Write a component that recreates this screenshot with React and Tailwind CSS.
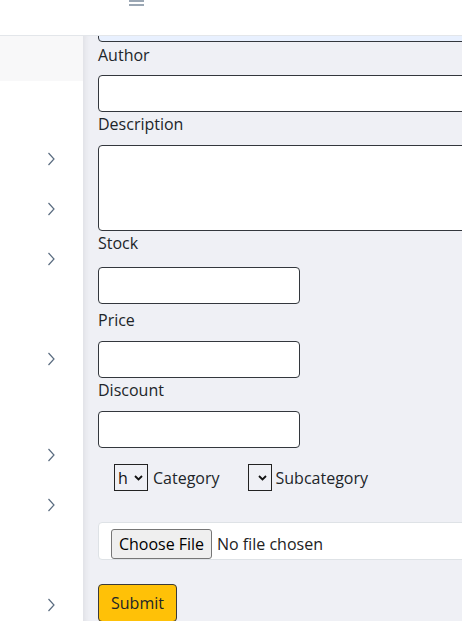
const rows = [
  { h: 50, arrow: true },
  { h: 50, arrow: true },
  { h: 50, arrow: true },
  { h: 50, arrow: false },
  { h: 50, arrow: true },
  { h: 46, arrow: false },
  { h: 50, arrow: true },
  { h: 50, arrow: true },
  { h: 50, arrow: false },
  { h: 50, arrow: true },
];

function Chevron() {
  return (
    <svg width="8" height="14" viewBox="0 0 8 14" fill="none">
      <polyline points="1.5,1 7,7 1.5,13" stroke="#5a6c80" strokeWidth="1.2" />
    </svg>
  );
}

function SelectBox({ value, w }) {
  return (
    <div className={`flex items-center h-[27px] border border-[#222] bg-transparent ${w}`}>
      {value && <span className="pl-[3px] text-[#111] leading-none">{value}</span>}
      <svg className="ml-auto mr-[4px]" width="9" height="6" viewBox="0 0 9 6" fill="none">
        <polyline points="1,1 4.5,4.5 8,1" stroke="#111" strokeWidth="1.8" />
      </svg>
    </div>
  );
}

function Label({ children, className = "" }) {
  return <label className={`block leading-6 ${className}`}>{children}</label>;
}

export default function App() {
  const field = "block h-[37px] rounded border border-[#33373d] bg-white";
  return (
    <div
      className="w-[462px] h-[621px] overflow-hidden bg-white text-[16px] text-[#212529]"
      style={{ fontFamily: '"Open Sans", "Noto Sans", sans-serif' }}
    >
      <header className="h-[36px] border-b border-[#e3e6ea] bg-white pl-[129px] flex flex-col gap-[2px]">
        <div className="w-[15px] h-[2px] bg-[#9ba7b4]" />
        <div className="w-[15px] h-[2px] bg-[#9ba7b4]" />
      </header>

      <div className="flex h-[585px]">
        <aside className="w-[83px] shrink-0 bg-white">
          <div className="h-[45px] bg-[#f8f8f9]" />
          <div className="h-[53px]" />
          {rows.map((r, i) => (
            <div key={i} className="flex items-center pl-[47px]" style={{ height: r.h }}>
              {r.arrow && <Chevron />}
            </div>
          ))}
        </aside>

        <main className="flex-1 overflow-hidden bg-[#eff0f5] pl-[15px] shadow-[inset_7px_0_6px_-5px_rgba(0,0,0,0.07)]">
          <div className="mt-[-31px] h-[37px] w-[400px] rounded border border-[#33373d] bg-[#e8f0fe]" />

          <Label className="mt-[1px]">Author</Label>
          <div className={`${field} w-[400px] mt-[8px]`} />

          <Label>Description</Label>
          <div className="mt-[9px] h-[86px] w-[400px] rounded border border-[#33373d] bg-white" />

          <Label>Stock</Label>
          <div className={`${field} w-[202px] mt-[12px]`} />

          <Label className="mt-[4px]">Price</Label>
          <div className={`${field} w-[202px] mt-[9px]`} />

          <Label>Discount</Label>
          <div className={`${field} w-[202px] mt-[9px]`} />

          <div className="mt-[16px] ml-[16px] flex items-center">
            <SelectBox value="h" w="w-[34px]" />
            <span className="ml-[5px]">Category</span>
            <div className="ml-[28px]">
              <SelectBox w="w-[24px]" />
            </div>
            <span className="ml-[4px]">Subcategory</span>
          </div>

          <div className="mt-[31px] h-[38px] w-[400px] rounded border border-[#dee2e6] bg-white pl-[12px] pt-[6px]">
            <div className="flex items-center">
              <span className="flex h-[30px] w-[101px] items-center justify-center rounded-[3px] border border-[#767676] bg-[#efefef] text-black">
                Choose File
              </span>
              <span className="ml-[5px] text-[#222]">No file chosen</span>
            </div>
          </div>

          <button className="mt-[24px] h-[38px] rounded border border-[#3a3a3a] bg-[#ffc107] px-[12px] leading-6 text-[#212529]">
            Submit
          </button>
        </main>
      </div>
    </div>
  );
}
